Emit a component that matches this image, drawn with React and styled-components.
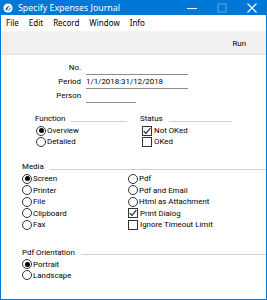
import React from "react";
import styled, { createGlobalStyle } from "styled-components";

const GlobalStyle = createGlobalStyle`
  html, body {
    margin: 0;
    padding: 0;
    background: #ffffff;
  }
  body {
    font-family: Roboto, "Noto Sans", "Liberation Sans", sans-serif;
    font-size: 7.9px;
    color: #000000;
  }
`;

const Frame = styled.div`
  width: 267px;
  height: 300px;
  box-sizing: border-box;
  display: flex;
  flex-direction: column;
  border: 1px solid #0078d7;
  border-top: none;
  background: #ffffff;
  overflow: hidden;
`;

const TitleBar = styled.div`
  height: 15px;
  margin: 0 -1px;
  background: #0078d7;
  display: flex;
  align-items: center;
  color: #ffffff;
  font-family: "Noto Sans", sans-serif;
  font-size: 8.8px;
  padding-left: 3px;
`;

const TitleText = styled.span`
  margin-left: 5px;
  flex: 1;
  white-space: nowrap;
`;

const WinButton = styled.div`
  width: 30px;
  height: 15px;
  display: flex;
  align-items: center;
  justify-content: center;
  opacity: ${(p) => (p.$dim ? 0.35 : 1)};
`;

const MenuBar = styled.div`
  height: 16px;
  display: flex;
  align-items: center;
  padding-left: 5px;
  gap: 10px;
  background: #ffffff;
  font-family: "Noto Sans", sans-serif;
  font-size: 8px;
`;

const MenuItem = styled.span`
  line-height: 16px;
`;

const Toolbar = styled.div`
  height: 22px;
  background: #f0f0f0;
  border-top: 1px solid #f4f4f4;
  border-bottom: 1px solid #e3e3e3;
  display: flex;
  align-items: center;
  justify-content: flex-end;
  padding-right: 20px;
`;

const Content = styled.div`
  flex: 1;
  padding-top: 6px;
  display: flex;
  flex-direction: column;
`;

const Fields = styled.div`
  display: grid;
  grid-template-columns: 80px auto;
  grid-auto-rows: 14px;
  column-gap: 5px;
`;

const Label = styled.div`
  text-align: right;
  line-height: 14px;
`;

const Field = styled.div`
  width: ${(p) => p.$w}px;
  height: 13px;
  line-height: 14px;
  border-bottom: 1px solid #8c8c8c;
  white-space: nowrap;
`;

const TwoCols = styled.div`
  display: grid;
  grid-template-columns: ${(p) => p.$cols};
  column-gap: ${(p) => p.$gap}px;
  padding-left: ${(p) => p.$left}px;
  margin-top: ${(p) => p.$top}px;
`;

const Section = styled.div`
  display: flex;
  flex-direction: column;
  margin-top: ${(p) => p.$top || 0}px;
  padding-left: ${(p) => p.$left || 0}px;
  width: ${(p) => p.$width}px;
`;

const Header = styled.div`
  height: 12px;
  display: flex;
  align-items: center;
  gap: 6px;
  line-height: 12px;
  &::after {
    content: "";
    flex: 1;
    height: 1px;
    margin-top: 4px;
    background: #cfcfcf;
  }
`;

const Column = styled.div`
  display: flex;
  flex-direction: column;
  padding-left: ${(p) => p.$indent || 0}px;
`;

const OptionRow = styled.div`
  height: ${(p) => p.$h || 11}px;
  display: flex;
  align-items: center;
  white-space: nowrap;
`;

const Radio = styled.span`
  width: 10px;
  height: 10px;
  box-sizing: border-box;
  border: 1px solid #333333;
  border-radius: 50%;
  margin-right: 1px;
  display: flex;
  align-items: center;
  justify-content: center;
  flex: none;
  &::after {
    content: "";
    width: 5px;
    height: 5px;
    border-radius: 50%;
    background: ${(p) => (p.$on ? "#000000" : "transparent")};
  }
`;

const Box = styled.span`
  width: 10px;
  height: 10px;
  box-sizing: border-box;
  border: 1px solid #333333;
  margin-right: 2px;
  flex: none;
  display: flex;
  align-items: center;
  justify-content: center;
`;

const Check = () => (
  <svg width="8" height="8" viewBox="0 0 8 8">
    <path d="M0.8 4.2 L3 6.4 L7.3 1.2" fill="none" stroke="#222" strokeWidth="1.1" />
  </svg>
);

const RadioOption = ({ on, h, children }) => (
  <OptionRow $h={h}>
    <Radio $on={on} />
    {children}
  </OptionRow>
);

const CheckOption = ({ on, h, children }) => (
  <OptionRow $h={h}>
    <Box>{on && <Check />}</Box>
    {children}
  </OptionRow>
);

const AppIcon = () => (
  <svg width="10" height="10" viewBox="0 0 10 10">
    <circle cx="5" cy="5" r="4.6" fill="#ffffff" />
    <path d="M2.4 6.8 C3.2 3.6 5.6 2.4 7.6 3.1 C5.6 3.4 4.4 5 4.3 7.6 Z" fill="#1d4f8a" />
    <path d="M5.4 7.8 C6.4 6.8 7.4 5.8 7.8 4.6" fill="none" stroke="#1d4f8a" strokeWidth="0.9" />
  </svg>
);

export default function App() {
  return (
    <>
      <GlobalStyle />
      <Frame>
        <TitleBar>
          <AppIcon />
          <TitleText>Specify Expenses Journal</TitleText>
          <WinButton>
            <svg width="10" height="10" viewBox="0 0 10 10">
              <path d="M0 5.5 H10" stroke="#fff" strokeWidth="1" />
            </svg>
          </WinButton>
          <WinButton $dim>
            <svg width="10" height="10" viewBox="0 0 10 10">
              <rect x="1" y="1" width="8" height="8" fill="none" stroke="#fff" strokeWidth="1" />
            </svg>
          </WinButton>
          <WinButton>
            <svg width="10" height="10" viewBox="0 0 10 10">
              <path d="M0.5 0.5 L9.5 9.5 M9.5 0.5 L0.5 9.5" stroke="#fff" strokeWidth="1.1" />
            </svg>
          </WinButton>
        </TitleBar>
        <MenuBar>
          <MenuItem>File</MenuItem>
          <MenuItem>Edit</MenuItem>
          <MenuItem>Record</MenuItem>
          <MenuItem>Window</MenuItem>
          <MenuItem>Info</MenuItem>
        </MenuBar>
        <Toolbar>Run</Toolbar>
        <Content>
          <Fields>
            <Label>No.</Label>
            <Field $w={102} />
            <Label>Period</Label>
            <Field $w={102}>1/1/2018:31/12/2018</Field>
            <Label>Person</Label>
            <Field $w={50} />
          </Fields>

          <TwoCols $cols="92px 92px" $gap={13} $left={34} $top={10}>
            <Column>
              <Header>Function</Header>
              <Column $indent={1}>
                <RadioOption on>Overview</RadioOption>
                <RadioOption>Detailed</RadioOption>
              </Column>
            </Column>
            <Column>
              <Header>Status</Header>
              <Column $indent={2}>
                <CheckOption on>Not OKed</CheckOption>
                <CheckOption>OKed</CheckOption>
              </Column>
            </Column>
          </TwoCols>

          <Section $top={14} $left={21} $width={250}>
            <Header>Media</Header>
            <TwoCols $cols="106px auto" $gap={0} $left={0} $top={0}>
              <Column>
                <RadioOption on h={11.5}>Screen</RadioOption>
                <RadioOption h={11.5}>Printer</RadioOption>
                <RadioOption h={11.5}>File</RadioOption>
                <RadioOption h={11.5}>Clipboard</RadioOption>
                <RadioOption h={11.5}>Fax</RadioOption>
              </Column>
              <Column>
                <RadioOption h={11.5}>Pdf</RadioOption>
                <RadioOption h={11.5}>Pdf and Email</RadioOption>
                <RadioOption h={11.5}>Html as Attachment</RadioOption>
                <CheckOption on h={11.5}>Print Dialog</CheckOption>
                <CheckOption h={11.5}>Ignore Timeout Limit</CheckOption>
              </Column>
            </TwoCols>
          </Section>

          <Section $top={16} $left={21} $width={250}>
            <Header>Pdf Orientation</Header>
            <RadioOption on>Portrait</RadioOption>
            <RadioOption>Landscape</RadioOption>
          </Section>
        </Content>
      </Frame>
    </>
  );
}
